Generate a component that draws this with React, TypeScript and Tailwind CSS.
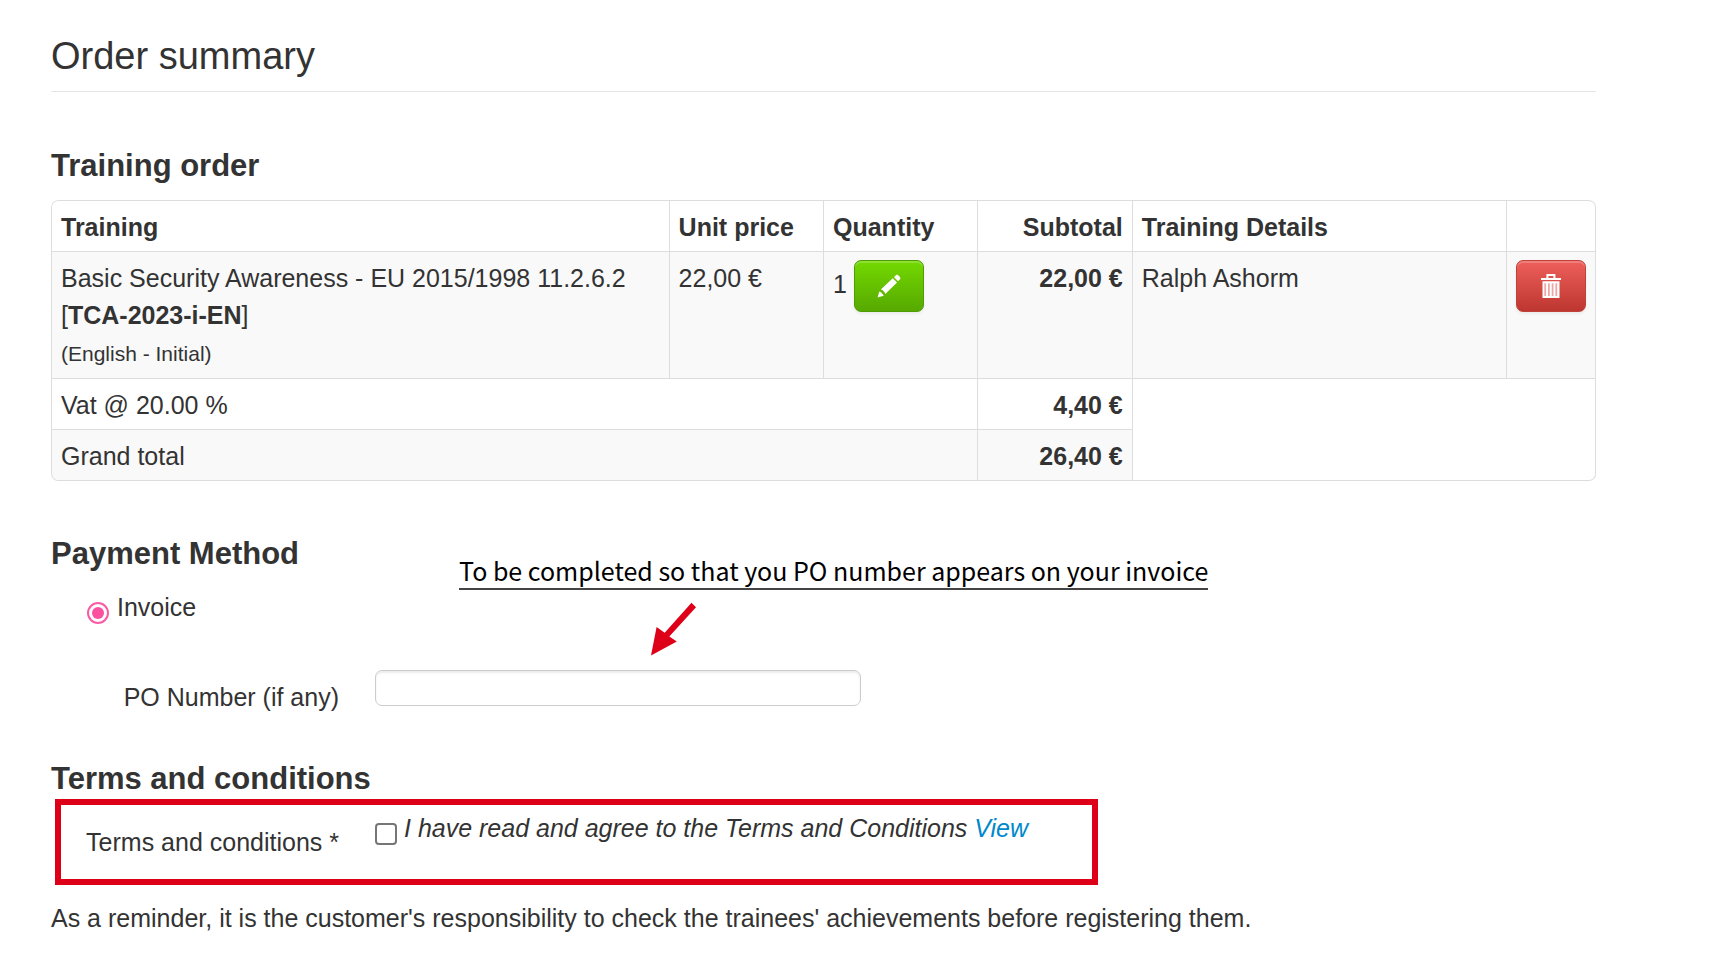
import type { ReactNode } from "react";

const cell = "border-t border-l border-[#dddddd] px-[9px] pt-2 pb-[5px] align-top";

function PencilIcon() {
  return (
    <svg viewBox="0 0 24 24" className="size-6" fill="#ffffff" aria-hidden="true">
      <path d="M0.6 23.6 2.3 17.4 C3.6 17.6 6.5 20.4 6.7 21.8 Z" />
      <path d="M3.8 15.6 15.8 4.2 20 8.4 8.3 20.1 C8 18.2 5.8 15.9 3.8 15.6 Z" />
      <path d="M17 3.2 19.1 1 C20.3 -0.1 24.2 3.6 23.2 4.9 L21.1 7.2 Z" />
    </svg>
  );
}

function TrashIcon() {
  return (
    <svg viewBox="0 0 20 24" className="h-6 w-5" aria-hidden="true">
      <path d="M6.4 4 V1 H13.4 V4" fill="none" stroke="#ffffff" strokeWidth="2" />
      <path d="M0 4 H20 V6 H0 Z" fill="#ffffff" />
      <path d="M1.5 7.2 H18.5 V24 H1.5 Z" fill="#ffffff" />
      <path
        d="M4.2 9.2 V22 M7.9 9.2 V22 M11.6 9.2 V22 M15.3 9.2 V22"
        stroke="#eba9a6"
        strokeWidth="1.8"
        fill="none"
      />
    </svg>
  );
}

function SectionTitle({ children }: { children: ReactNode }) {
  return <h2 className="text-[31px] leading-10 font-bold">{children}</h2>;
}

export default function App() {
  return (
    <main className="bg-white pt-[35px] pr-[136px] pb-5 pl-[51px] font-['Liberation_Sans',Arial,sans-serif] text-[25px] leading-[37px] text-[#333333]">
      <h1 className="border-b border-[#e5e5e5] pb-[13px] text-[38px] leading-[43px]">Order summary</h1>

      <section className="mt-[54px]">
        <SectionTitle>Training order</SectionTitle>
        <table className="mt-[14px] w-full table-fixed border-separate border-spacing-0 overflow-hidden rounded-[7px] border-r border-b border-[#dddddd] text-left">
          <colgroup>
            <col className="w-[40%]" />
            <col className="w-[10%]" />
            <col className="w-[10%]" />
            <col className="w-[10%]" />
            <col />
            <col className="w-[89px]" />
          </colgroup>
          <thead>
            <tr className="h-[51px]">
              <th className={`${cell} rounded-tl-[7px]`}>Training</th>
              <th className={cell}>Unit price</th>
              <th className={cell}>Quantity</th>
              <th className={`${cell} text-right`}>Subtotal</th>
              <th className={cell}>Training Details</th>
              <td className={`${cell} rounded-tr-[7px]`} />
            </tr>
          </thead>
          <tbody>
            <tr className="h-[127px] bg-[#f9f9f9]">
              <td className={cell}>
                Basic Security Awareness - EU 2015/1998 11.2.6.2
                <br />[<b>TCA-2023-i-EN</b>]<br />
                <span className="text-[21px]">(English - Initial)</span>
              </td>
              <td className={cell}>22,00 €</td>
              <td className={cell}>
                <div className="flex items-start gap-[7px]">
                  <span className="leading-[48px]">1</span>
                  <button
                    type="button"
                    aria-label="Edit quantity"
                    className="flex h-[52px] w-[70px] items-center justify-center rounded-[7px] border border-[#4f9c05] bg-linear-to-b from-[#73d900] to-[#57a900] shadow-[inset_0_2px_0_rgba(255,255,255,0.2),0_2px_3px_rgba(0,0,0,0.06)]"
                  >
                    <PencilIcon />
                  </button>
                </div>
              </td>
              <td className={`${cell} text-right font-bold`}>22,00 €</td>
              <td className={cell}>Ralph Ashorm</td>
              <td className={cell}>
                <button
                  type="button"
                  aria-label="Remove training"
                  className="flex h-[52px] w-[70px] items-center justify-center rounded-[7px] border border-[#c0403a] bg-linear-to-b from-[#ee5f5b] to-[#bd362f] shadow-[inset_0_2px_0_rgba(255,255,255,0.2),0_2px_3px_rgba(0,0,0,0.06)]"
                >
                  <TrashIcon />
                </button>
              </td>
            </tr>
            <tr className="h-[51px]">
              <td className={cell} colSpan={3}>Vat @ 20.00 %</td>
              <td className={`${cell} text-right font-bold`}>4,40 €</td>
              <td className={`${cell} rounded-br-[7px]`} colSpan={2} rowSpan={2} />
            </tr>
            <tr className="h-[51px]">
              <td className={`${cell} rounded-bl-[7px] bg-[#f9f9f9]`} colSpan={3}>Grand total</td>
              <td className={`${cell} bg-[#f9f9f9] text-right font-bold`}>26,40 €</td>
            </tr>
          </tbody>
        </table>
      </section>

      <section className="relative mt-[53px]">
        <SectionTitle>Payment Method</SectionTitle>
        <label className="mt-[15px] ml-9 flex items-start gap-2">
          <input
            type="radio"
            name="payment"
            defaultChecked
            className="mt-[13px] size-[22px] appearance-none rounded-full border-2 border-[#fb5ba6] bg-[#fb4f9f] bg-clip-content p-[3px]"
          />
          <span>Invoice</span>
        </label>
        <div className="mt-11 flex items-start gap-9">
          <label htmlFor="po" className="mt-[9px] w-72 text-right">
            PO Number (if any)
          </label>
          <input
            id="po"
            type="text"
            className="h-9 w-[486px] rounded-[7px] border border-[#cccccc] bg-white px-2 shadow-[inset_0_2px_2px_rgba(0,0,0,0.075)] outline-none"
          />
        </div>
        <div className="absolute top-[18px] left-[408px] font-['Noto_Sans_CJK_JP',sans-serif] text-[25px] whitespace-nowrap text-black">
          <p className="border-b-2 border-[#444444] leading-9">
            To be completed so that you PO number appears on your invoice
          </p>
          <svg viewBox="0 0 46 54" className="mt-3 ml-48 h-[54px] w-[46px]" fill="#de0018" aria-hidden="true">
            <path d="M0 53.5 5.6 25 13.7 30.7 40.5 0.8 45 5.2 18.3 34.5 25.8 39.5 Z" />
          </svg>
        </div>
      </section>

      <section className="mt-[43px]">
        <SectionTitle>Terms and conditions</SectionTitle>
        <div className="ml-1 flex h-[86px] w-[1043px] max-w-full items-start gap-9 border-6 border-[#de0018]">
          <label htmlFor="terms" className="mt-[19px] w-[278px] text-right">
            Terms and conditions *
          </label>
          <div className="flex items-start gap-[7px]">
            <input
              id="terms"
              type="checkbox"
              className="mt-[18px] size-[22px] appearance-none rounded-[4px] border-2 border-[#767676] bg-white"
            />
            <p className="mt-[5px] italic">
              I have read and agree to the Terms and Conditions{" "}
              <a href="#terms" className="text-[#0088cc]">View</a>
            </p>
          </div>
        </div>
        <p className="mt-[15px]">
          As a reminder, it is the customer's responsibility to check the trainees' achievements before registering them.
        </p>
      </section>
    </main>
  );
}
